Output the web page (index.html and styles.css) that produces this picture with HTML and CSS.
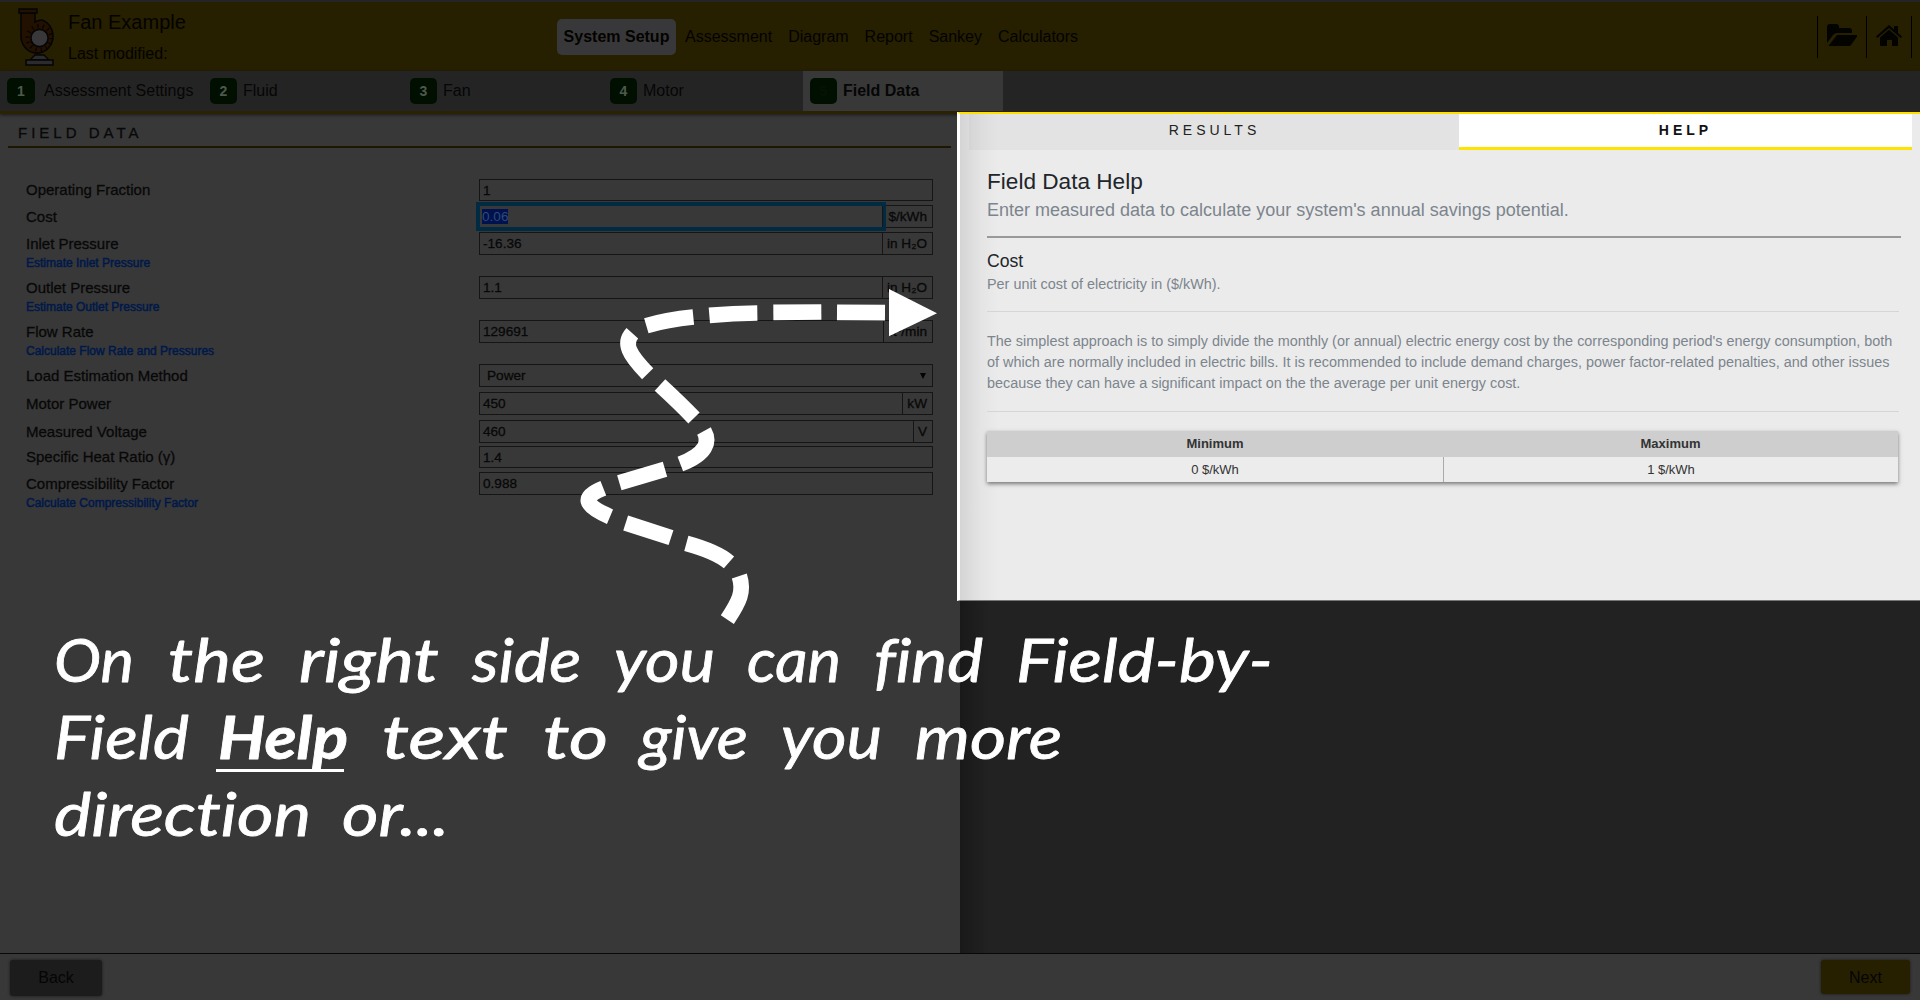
FILE: index.html
```html
<!DOCTYPE html>
<html lang="en">
<head>
<meta charset="utf-8">
<title>Fan Example</title>
<link rel="stylesheet" href="styles.css">
</head>
<body>
<div class="app">
  <header class="header">
    <svg class="logo" viewBox="0 0 41 58">
      <path d="M3 5h14v9c2-1 4-2 7-2a16 17 0 1 1-21 17z" fill="#221000" stroke="#050505" stroke-width="1.6"/>
      <rect x="1" y="1" width="18" height="4" fill="#221000" stroke="#050505" stroke-width="1.6"/>
      <path d="M17 47h9l5 5H12z" fill="#2b2b2e" stroke="#050505" stroke-width="1.4"/>
      <rect x="8" y="52" width="27" height="5" fill="#2b2b2e" stroke="#050505" stroke-width="1.6"/>
      <circle cx="21.5" cy="30" r="12" fill="none" stroke="#080400" stroke-width="4" stroke-dasharray="1.2 4.2"/>
      <circle cx="21.5" cy="30" r="8.6" fill="#38383a" stroke="#050505" stroke-width="1.6"/>
    </svg>
    <div class="titles">
      <div class="title">Fan Example</div>
      <div class="modified">Last modified:</div>
    </div>
    <nav class="menu">
      <a class="menu-active">System Setup</a><a>Assessment</a><a>Diagram</a><a>Report</a><a>Sankey</a><a>Calculators</a>
    </nav>
    <div class="tools">
      <span class="tool"><svg width="30" height="23" viewBox="0 0 30 23"><path d="M0 3a3 3 0 0 1 3-3h6a3 3 0 0 1 3 3v1h10a3 3 0 0 1 3 3v2H10c-2 0-3 1-4 2l-6 8z"/><path d="M10 11h19c1 0 1.500.6 1 1.400l-6 8.600c-.6.700-1 1-2 1H1.500z"/></svg></span>
      <span class="tool tool-home"><svg width="26" height="21" viewBox="0 0 26 21"><path d="M13 0 18 4.400V1h4v7l4 3.500-1.300 1.500L13 3 1.300 13 0 11.500z"/><path d="M13 4.800 22 12.500V20a1 1 0 0 1-1 1h-5v-6h-5v6H5a1 1 0 0 1-1-1v-7.500z"/></svg></span>
    </div>
  </header>
  <nav class="steps">
    <a class="step step-first"><b>1</b>Assessment Settings</a>
    <a class="step"><b>2</b>Fluid</a>
    <a class="step"><b>3</b>Fan</a>
    <a class="step"><b>4</b>Motor</a>
    <a class="step step-active"><b>5</b>Field Data</a>
  </nav>
  <main class="main">
    <section class="left">
      <h2 class="panel-title">FIELD DATA</h2>
      <div class="form">
        <div class="row short"><label>Operating Fraction</label><div class="field"><span class="value">1</span></div></div>
        <div class="row"><label>Cost</label><div class="field"><span class="value focused"><mark>0.06</mark></span><span class="unit">$/kWh</span></div></div>
        <div class="row linked"><label>Inlet Pressure<a>Estimate Inlet Pressure</a></label><div class="field"><span class="value">-16.36</span><span class="unit">in H₂O</span></div></div>
        <div class="row linked"><label>Outlet Pressure<a>Estimate Outlet Pressure</a></label><div class="field"><span class="value">1.1</span><span class="unit">in H₂O</span></div></div>
        <div class="row linked"><label>Flow Rate<a>Calculate Flow Rate and Pressures</a></label><div class="field"><span class="value">129691</span><span class="unit unit-flow">ft³/min</span></div></div>
        <div class="row tall"><label>Load Estimation Method</label><div class="field"><span class="value select">Power</span><i class="caret"></i></div></div>
        <div class="row tall"><label>Motor Power</label><div class="field"><span class="value">450</span><span class="unit unit-kw">kW</span></div></div>
        <div class="row tight"><label>Measured Voltage</label><div class="field"><span class="value">460</span><span class="unit unit-v">V</span></div></div>
        <div class="row short"><label>Specific Heat Ratio (γ)</label><div class="field"><span class="value">1.4</span></div></div>
        <div class="row linked"><label>Compressibility Factor<a>Calculate Compressibility Factor</a></label><div class="field"><span class="value">0.988</span></div></div>
      </div>
    </section>
    <section class="right">
      <div class="help">
        <div class="tabs"><span class="tab tab-results">RESULTS</span><span class="tab tab-help">HELP</span></div>
        <div class="help-body">
          <h3>Field Data Help</h3>
          <p class="lead">Enter measured data to calculate your system's annual savings potential.</p>
          <div class="rule-strong"></div>
          <h4>Cost</h4>
          <p class="desc">Per unit cost of electricity in ($/kWh).</p>
          <div class="rule"></div>
          <p class="text">The simplest approach is to simply divide the monthly (or annual) electric energy cost by the corresponding period's energy consumption, both<br>of which are normally included in electric bills. It is recommended to include demand charges, power factor-related penalties, and other issues<br>because they can have a significant impact on the the average per unit energy cost.</p>
          <div class="rule"></div>
          <div class="range">
            <b>Minimum</b><b>Maximum</b>
            <span>0 $/kWh</span><span>1 $/kWh</span>
          </div>
        </div>
      </div>
    </section>
  </main>
  <footer class="footer"><span class="btn">Back</span><span class="btn btn-next">Next</span></footer>
</div>
<svg class="tour" viewBox="0 0 1920 1000">
  <g transform="translate(560 280) scale(.33333)">
    <g fill="none" stroke="#fff" stroke-width="47">
      <path d="M502 1019C538 965 553 935 538 888"/>
      <path d="M507 847Q470 815 379 790"/>
      <path d="M333 773 197 729"/>
      <path d="M150 710C67 675 67 650 130 625"/>
      <path d="M178 608 315 568"/>
      <path d="M361 552C440 522 450 485 432 453"/>
      <path d="M402 414Q360 370 300 315"/>
      <path d="M263 281C205 222 190 190 217 160"/>
      <path d="M259 137Q320 119 400 111"/>
      <path d="M448 106Q520 100 592 99"/>
      <path d="M640 97 784 96"/>
      <path d="M831 97 975 98"/>
    </g>
    <path d="M987 27V169L1131 100z" fill="#fff"/>
  </g>
  <g class="note">
    <text x="54" y="682" textLength="80" lengthAdjust="spacingAndGlyphs">On</text>
    <text x="168" y="682" textLength="97" lengthAdjust="spacingAndGlyphs">the</text>
    <text x="299" y="682" textLength="140" lengthAdjust="spacingAndGlyphs">right</text>
    <text x="472" y="682" textLength="109" lengthAdjust="spacingAndGlyphs">side</text>
    <text x="614" y="682" textLength="101" lengthAdjust="spacingAndGlyphs">you</text>
    <text x="747" y="682" textLength="94" lengthAdjust="spacingAndGlyphs">can</text>
    <text x="874" y="682" textLength="109" lengthAdjust="spacingAndGlyphs">find</text>
    <text x="1016" y="682" textLength="257" lengthAdjust="spacingAndGlyphs">Field-by-</text>
    <text x="54" y="759" textLength="135" lengthAdjust="spacingAndGlyphs">Field</text>
    <text x="218" y="759" textLength="130" lengthAdjust="spacingAndGlyphs" class="strong">Help</text>
    <text x="382" y="759" textLength="126" lengthAdjust="spacingAndGlyphs">text</text>
    <text x="543" y="759" textLength="65" lengthAdjust="spacingAndGlyphs">to</text>
    <text x="640" y="759" textLength="108" lengthAdjust="spacingAndGlyphs">give</text>
    <text x="781" y="759" textLength="101" lengthAdjust="spacingAndGlyphs">you</text>
    <text x="915" y="759" textLength="147" lengthAdjust="spacingAndGlyphs">more</text>
    <text x="54" y="836" textLength="257" lengthAdjust="spacingAndGlyphs">direction</text>
    <text x="342" y="836" textLength="107" lengthAdjust="spacingAndGlyphs">or...</text>
    <rect x="216" y="769" width="128" height="3" stroke="none"/>
  </g>
</svg>
</body>
</html>
```
FILE: styles.css
```css
* { box-sizing: border-box; }
body { margin: 0; background: #383838; color: #080808; font-family: "Liberation Sans", Arial, sans-serif; font-size: 16px; }
h2, h3, h4, p { margin: 0; font-weight: 400; }
.app { width: 1920px; height: 1000px; display: flex; flex-direction: column; overflow: hidden; }

.header { height: 71px; border-top: 2px solid #242427; background: #261f00; display: flex; align-items: flex-start; color: #040300; flex: none; }
.logo { width: 41px; height: 58px; margin: 6px 9px 0 18px; }
.titles { width: 489px; padding-top: 8px; }
.title { font-size: 20px; line-height: 24px; }
.modified { line-height: 20px; margin-top: 10px; }
.menu { display: flex; gap: 16px; padding-top: 17px; line-height: 36px; }
.menu-active { width: 119px; margin-right: -7px; text-align: center; background: #38383a; border-radius: 5px; font-weight: 700; white-space: nowrap; }
.tools { margin: 14px 8px 0 auto; display: flex; height: 42px; border-right: 1px solid #000; }
.tool { width: 49px; border-left: 1px solid #000; padding: 8px 0 0 9px; }
.tool-home { width: 45px; padding-top: 9px; }
.tool svg { display: block; fill: #030300; }

.steps { height: 43px; flex: none; display: flex; background: #242424; border-bottom: 3px solid #2a2200; box-shadow: 0 1px 3px #1b1b1b; position: relative; color: #060606; }
.step { width: 200px; padding-left: 7px; display: flex; align-items: center; gap: 6px; }
.step b { width: 27px; height: 26px; border-radius: 5px; background: #000f00; color: #4e584e; font-size: 14px; line-height: 26px; text-align: center; }
.step-first { width: 203px; gap: 9px; }
.step-first b { width: 28px; }
.step-active { background: #383838; font-weight: 700; }
.step-active b { color: #061206; }

.main { flex: 1; display: flex; min-height: 0; }
.left { width: 960px; background: #383838; }
.panel-title { margin: 6px 9px 0 8px; padding-left: 10px; line-height: 26px; font-size: 15px; letter-spacing: 4px; border-bottom: 2px solid #1c1700; -webkit-text-stroke: .3px #080808; }
.form { margin: 31px 27px 0 26px; font-size: 15px; }
.row { display: flex; height: 27px; --box: 23px; }
.row.short { height: 26px; --box: 22px; }
.row.tight { height: 26px; }
.row.tall { height: 28px; }
.row.linked { height: 44px; }
.row label { width: 453px; line-height: var(--box); -webkit-text-stroke: .3px #080808; }
.row a { display: block; font-size: 12px; line-height: 17px; color: #00194a; -webkit-text-stroke: .5px #00194a; }
.field { flex: 1; height: var(--box); display: flex; border: 1px solid #151515; font-size: 13.6px; line-height: calc(var(--box) - 1px); position: relative; }
.value { flex: 1; padding-left: 3px; -webkit-text-stroke: .3px #080808; }
.select { padding-left: 7px; }
.unit { width: 50px; border-left: 1px solid #151515; padding-right: 5px; text-align: right; white-space: nowrap; -webkit-text-stroke: .3px #080808; }
.unit-flow { width: 49px; }
.unit-kw { width: 30px; }
.unit-v { width: 19px; }
.focused { outline: 4px solid #002b42; padding-left: 2px; line-height: 22px; }
.focused mark { background: #001150; color: #2f4a72; -webkit-text-stroke: 0; }
.caret { border: 3px solid transparent; border-top: 6px solid #020202; border-bottom: 0; width: 6px; height: 6px; margin: 8px 6px 0 0; }

.right { flex: 1; min-width: 0; background: linear-gradient(90deg, #191919, #222 30px); }
.help { position: relative; margin: -2px 0 0 -3px; height: 489px; border-left: 3px solid #fff; border-top: 2px solid #ffe100; border-bottom: 1px solid #777; background: linear-gradient(90deg, #d4d4d4, #e4e4e4 20px, #ebebeb 38px); }
.tabs { display: flex; padding: 0 8px 0 9px; height: 36px; font-size: 14px; line-height: 32px; letter-spacing: 4px; text-align: center; color: #222; }
.tab-results { width: 490px; background: #00000008; padding-left: 1px; }
.tab-help { flex: 1; background: #fff; color: #111; font-weight: 700; border-bottom: 3px solid #ffe300; }
.help-body { padding: 19px 21px 0 27px; color: #7c858d; }
h3 { font-size: 22.6px; line-height: 26px; color: #212529; }
.lead { font-size: 18px; line-height: 24px; margin-top: 3px; }
.rule-strong { height: 2px; margin: 14px -2px 0 0; background: #999; }
h4 { font-size: 17.6px; line-height: 22px; margin-top: 12px; color: #212529; }
.desc { font-size: 14.4px; line-height: 20px; margin-top: 2px; }
.rule { height: 1px; margin-top: 17px; background: #d5d5d5; }
.text { font-size: 14.42px; line-height: 21px; margin-top: 19px; white-space: nowrap; }
.range { margin: 19px 0 0; width: 911px; display: grid; grid-template-columns: 456px 1fr; font-size: 13px; text-align: center; color: #333; line-height: 25px; box-shadow: 0 2px 4px #777; background: #ececec; }
.range b { background: #cecece; height: 26px; line-height: 26px; }
.range span + span { border-left: 1px solid #aaa; }

.footer { height: 47px; flex: none; border-top: 1px solid #080808; background: #383838; display: flex; justify-content: space-between; padding: 6px 10px 0; }
.btn { width: 92px; height: 36px; line-height: 35px; text-align: center; background: #1c1c1c; border-radius: 3px; box-shadow: 0 0 3px #181818; color: #050505; }
.btn-next { width: 89px; height: 34px; background: #261f00; }

.tour { position: absolute; left: 0; top: 0; width: 1920px; height: 1000px; }
.note { fill: #fff; stroke: #fff; stroke-width: .8px; stroke-linejoin: round; font: italic 400 60px Lato, "Open Sans", sans-serif; font-variant-ligatures: none; }
.strong { font-weight: 700; }
```
